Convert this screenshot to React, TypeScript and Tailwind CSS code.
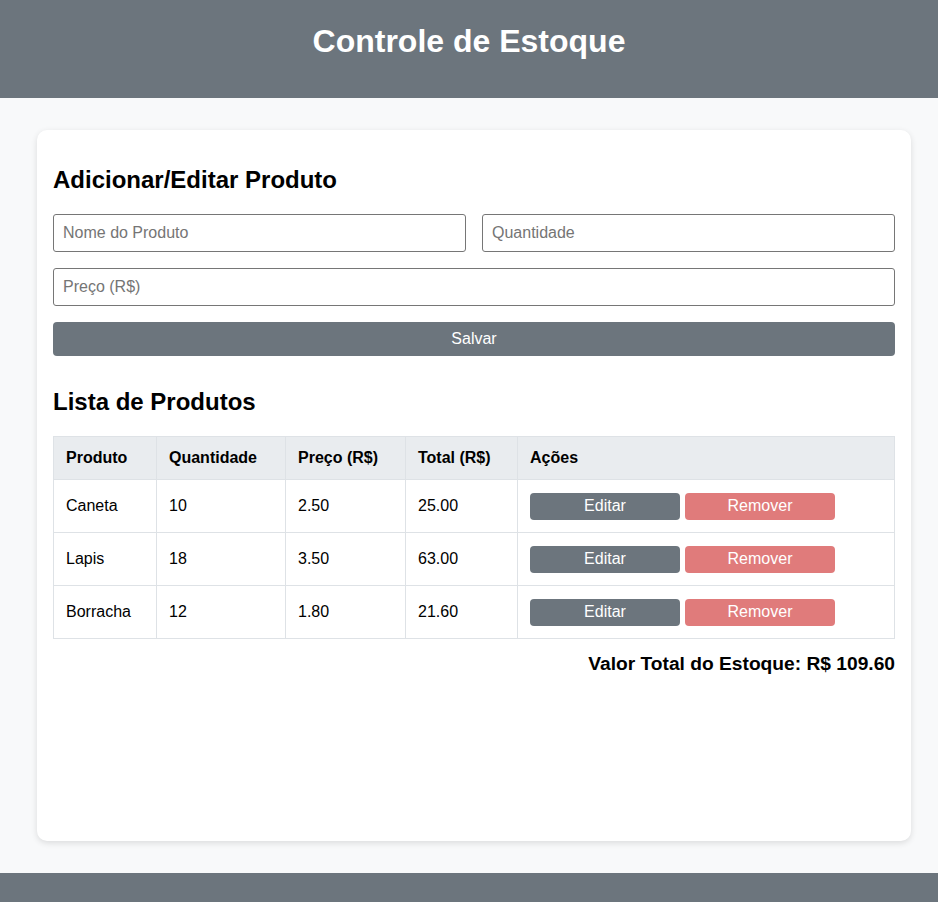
import React from "react";

const rows = [
  { nome: "Caneta", q: "10", p: "2.50", t: "25.00" },
  { nome: "Lapis", q: "18", p: "3.50", t: "63.00" },
  { nome: "Borracha", q: "12", p: "1.80", t: "21.60" },
];

export default function App() {
  return (
    <div className="min-h-screen bg-[#f8f9fa] text-black" style={{ fontFamily: '"Liberation Sans", Arial, sans-serif' }}>
      <header className="h-[98px] bg-[#6c757d] pt-[23px] text-center">
        <h1 className="text-[32px] font-bold leading-[37px] text-white">Controle de Estoque</h1>
      </header>
      <main className="pl-[37px] pr-[27px] pt-[32px] pb-[32px]">
        <div className="min-h-[711px] rounded-[10px] bg-white px-[16px] pt-[36px] shadow-[0_2px_6px_rgba(0,0,0,0.12)]">
          <h2 className="text-[24px] font-bold leading-[28px]">Adicionar/Editar Produto</h2>
          <div className="mt-[20px] flex flex-col gap-[16px]">
            <div className="flex gap-[16px]">
              <input
                placeholder="Nome do Produto"
                className="h-[38px] flex-1 rounded-[3px] border border-[#767676] px-[9px] text-[16px] placeholder:text-[#757575]"
              />
              <input
                placeholder="Quantidade"
                className="h-[38px] flex-1 rounded-[3px] border border-[#767676] px-[9px] text-[16px] placeholder:text-[#757575]"
              />
            </div>
            <input
              placeholder="Preço (R$)"
              className="h-[38px] w-full rounded-[3px] border border-[#767676] px-[9px] text-[16px] placeholder:text-[#757575]"
            />
            <button className="h-[34px] w-full rounded-[4px] bg-[#6c757d] text-[16px] text-white">Salvar</button>
          </div>
          <h2 className="mt-[32px] text-[24px] font-bold leading-[28px]">Lista de Produtos</h2>
          <table className="mt-[20px] w-full border-collapse text-left text-[16px]">
            <thead>
              <tr className="h-[43px] bg-[#e9ecef]">
                <th className="w-[103px] border border-[#dee2e6] px-[12px] font-bold">Produto</th>
                <th className="w-[129px] border border-[#dee2e6] px-[12px] font-bold">Quantidade</th>
                <th className="w-[120px] border border-[#dee2e6] px-[12px] font-bold">Preço (R$)</th>
                <th className="w-[112px] border border-[#dee2e6] px-[12px] font-bold">Total (R$)</th>
                <th className="border border-[#dee2e6] px-[12px] font-bold">Ações</th>
              </tr>
            </thead>
            <tbody>
              {rows.map((r) => (
                <tr key={r.nome} className="h-[53px]">
                  <td className="border border-[#dee2e6] px-[12px]">{r.nome}</td>
                  <td className="border border-[#dee2e6] px-[12px]">{r.q}</td>
                  <td className="border border-[#dee2e6] px-[12px]">{r.p}</td>
                  <td className="border border-[#dee2e6] px-[12px]">{r.t}</td>
                  <td className="border border-[#dee2e6] px-[12px]">
                    <div className="flex gap-[5px]">
                      <button className="h-[27px] w-[150px] rounded-[4px] bg-[#6c757d] text-[16px] text-white">Editar</button>
                      <button className="h-[27px] w-[150px] rounded-[4px] bg-[#e07b7b] text-[16px] text-white">Remover</button>
                    </div>
                  </td>
                </tr>
              ))}
            </tbody>
          </table>
          <div className="mt-[14px] text-right text-[19.2px] font-bold leading-[22px]">Valor Total do Estoque: R$ 109.60</div>
        </div>
      </main>
      <footer className="h-[60px] bg-[#6c757d]"></footer>
    </div>
  );
}
